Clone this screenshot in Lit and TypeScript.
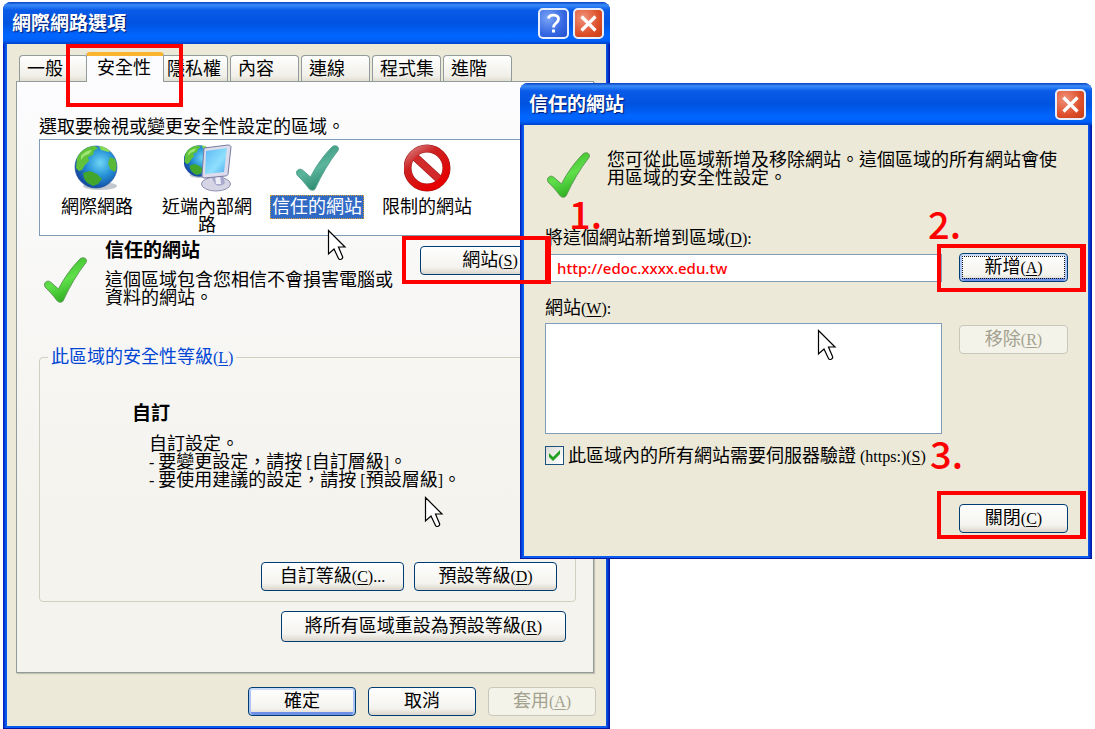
import { LitElement, html, css, svg, nothing } from "lit";
import { customElement, property, state } from "lit/decorators.js";

const latin = (s: string) => html`<span class="latin">${s}</span>`;
const key = (s: string, tail = "") =>
  html`<span class="latin">(<u>${s}</u>)${tail}</span>`;

const shared = css`
  * {
    box-sizing: border-box;
  }
  .latin {
    font-size: 16px;
    line-height: 14px;
  }
  u {
    text-decoration-thickness: 1px;
    text-underline-offset: 2px;
  }
  button {
    font: inherit;
    color: inherit;
    margin: 0;
    padding: 0;
  }
  .btn {
    height: 29px;
    padding-bottom: 2px;
    border: 1px solid #003c74;
    border-radius: 4px;
    background: linear-gradient(#ffffff, #f4f3ee 75%, #dcd6cc);
    line-height: 18px;
    white-space: nowrap;
  }
  .btn.primary {
    box-shadow: inset 0 2px 0 #cbdcfb, inset 2px 0 0 #a9c4f5,
      inset -2px 0 0 #a9c4f5, inset 0 -3px 0 #6e8fe6;
  }
  .btn.focused {
    outline: 1px dotted #111;
    outline-offset: -4px;
  }
  .btn:disabled {
    color: #a3a18f;
    border-color: #c9c7ba;
    background: #f4f3ea;
  }
`;

const checkMark = (id: string, light: string, dark: string, edge: string) => svg`
  <defs>
    <linearGradient id=${id} x1="0" y1="0" x2="0.4" y2="1">
      <stop offset="0" stop-color=${dark} />
      <stop offset="0.6" stop-color=${light} />
      <stop offset="1" stop-color=${dark} />
    </linearGradient>
  </defs>
  <path d="M2.500 28c1-3 4-3.500 6-2l8 7C22 22 30 11 38 3c2.500-2.500 8-1 6 3.500C35 18 28 30 21.500 44c-1 3-5 3-7 0C11 39 7 35 3 31z"
    fill="url(#${id})" stroke=${edge} stroke-width="1" />`;

const globe = (id: string) => svg`
  <defs>
    <radialGradient id=${id} cx="0.6" cy="0.4" r="0.65">
      <stop offset="0" stop-color="#6fd6f5" />
      <stop offset="0.5" stop-color="#2590d6" />
      <stop offset="1" stop-color="#12429b" />
    </radialGradient>
  </defs>
  <ellipse cx="26" cy="42" rx="17" ry="4" fill="#9aa3ad" opacity="0.6" />
  <circle cx="22" cy="23" r="21" fill="url(#${id})" stroke="#1b4f9c" stroke-width="0.6" />
  <path d="M3 14C6 7 13 2 21 2l3 2-4 3-1 4-5 2 1 4-4 4-3 5-3 1-3-3z" fill="#5fc23a" />
  <path d="M25 2c4 0 8 2 11 5l-2 1-3-1-4-1z" fill="#86dd55" />
  <path d="M9 29l7-2 7 3 5 5-4 5-5 2c-5-2-8-5-9-8z" fill="#42a52c" />
  <path d="M36 13l5 2c2 5 2 9 0 13l-5-3-2-6z" fill="#59b936" />
  <path d="M7 12c3-4 7-6 11-6l-3 4-5 2-3 4z" fill="#b0ef83" opacity="0.8" />`;

@customElement("zone-icon")
export class ZoneIcon extends LitElement {
  @property() kind = "check";

  static styles = css`
    :host {
      display: block;
    }
    .art {
      display: block;
      width: 48px;
      height: 48px;
    }
  `;

  private art() {
    switch (this.kind) {
      case "internet":
        return globe("g1");
      case "intranet":
        return svg`
          <g transform="translate(-1 0) scale(0.74)">${globe("g2")}</g>
          <defs>
            <linearGradient id="scr" x1="0" y1="0" x2="1" y2="1">
              <stop offset="0" stop-color="#5cb8f5" />
              <stop offset="0.6" stop-color="#8fe0fd" />
              <stop offset="1" stop-color="#4aa9f0" />
            </linearGradient>
          </defs>
          <ellipse cx="32" cy="40" rx="14.500" ry="7" fill="#d5d5e6" stroke="#8d8fb0" />
          <path d="M26 31h13l2 8c-3 3-7 4-10 1z" fill="#a9aacb" />
          <path d="M31 31h5l1 9h-5z" fill="#eeeef8" />
          <path d="M20 4l24-3c2 0 3 1 3 2l-3 27c0 1-1 2-3 2l-20 2c-2 0-3-1-3-3z" fill="#dcdcec" stroke="#7779a0" />
          <path d="M22 7l21-3-3 24-19 2z" fill="url(#scr)" />`;
      case "blocked":
        return svg`
          <defs>
            <linearGradient id="ban" x1="0" y1="0" x2="0.7" y2="1">
              <stop offset="0" stop-color="#d98080" />
              <stop offset="0.35" stop-color="#cc2222" />
              <stop offset="1" stop-color="#e60000" />
            </linearGradient>
          </defs>
          <circle cx="23" cy="24" r="19.500" fill="#ffffff" stroke="#9c1c1c" stroke-width="8" />
          <path d="M10 12L36 36" stroke="#9c1c1c" stroke-width="8" />
          <path d="M10 12L36 36" stroke="#d22a2a" stroke-width="7" />
          <circle cx="23" cy="24" r="19.500" fill="none" stroke="url(#ban)" stroke-width="7" />`;
      case "selected":
        return checkMark("c1", "#5ab59c", "#2f8a72", "#5aa590");
      default:
        return checkMark("c2", "#5fe04a", "#2fae20", "#5f9a55");
    }
  }

  render() {
    return html`<svg class="art" viewBox="0 0 48 48" aria-hidden="true">${this.art()}</svg>`;
  }
}

@customElement("xp-window")
export class XpWindow extends LitElement {
  @property() heading = "";
  @property({ type: Boolean }) help = false;

  static styles = [
    shared,
    css`
      :host {
        display: block;
      }
      .frame {
        padding: 0 4px 3px;
        border-radius: 8px 8px 0 0;
        background: linear-gradient(90deg, #0019b8, #0a5cf0 3px, #0a5cf0 calc(100% - 4px), #0010a0);
        box-shadow: inset 0 -1px 0 #0016a0;
      }
      .bar {
        display: flex;
        align-items: center;
        gap: 4px;
        height: 42px;
        margin: 0 -4px;
        padding: 1px 6px 0 9px;
        border-radius: 8px 8px 0 0;
        background: linear-gradient(#0840c0, #3a8bf8 3px, #0a5be8 8px, #0053e0 50%, #0066ff 80%, #0060f8 92%, #0040c8);
      }
      .title {
        flex: 1;
        margin: 0;
        color: #fff;
        font-size: 19px;
        line-height: 22px;
        font-weight: 700;
        text-shadow: 1px 1px 1px #001a70;
      }
      .cap {
        display: block;
        width: 31px;
        height: 31px;
        border: 2px solid #e8eefc;
        border-radius: 5px;
        background: radial-gradient(circle at 30% 30%, #7ba4f6, #3567e2 60%, #2450cc);
      }
      .cap.close {
        background: radial-gradient(circle at 30% 30%, #f0937a, #dd4f2a 60%, #c63c14);
      }
      .glyph {
        display: block;
        width: 27px;
        height: 27px;
      }
      .body {
        background: #ece9d8;
      }
    `,
  ];

  render() {
    return html`
      <section class="frame" aria-label=${this.heading}>
        <header class="bar">
          <h1 class="title">${this.heading}</h1>
          ${this.help
            ? html`<button class="cap" aria-label="說明">
                <svg class="glyph" viewBox="0 0 27 27" aria-hidden="true">
                  <path d="M8.500 8.500C9 4 18.500 4 18.500 9c0 4-5 4-5 8.500" fill="none" stroke="#fff" stroke-width="2.800" />
                  <rect x="12" y="19.500" width="3" height="3" fill="#fff" />
                </svg>
              </button>`
            : nothing}
          <button class="cap close" aria-label="關閉">
            <svg class="glyph" viewBox="0 0 27 27" aria-hidden="true">
              <path d="M6.500 6.500l14 14M20.500 6.500l-14 14" stroke="#fff" stroke-width="3.200" />
            </svg>
          </button>
        </header>
        <div class="body"><slot></slot></div>
      </section>
    `;
  }
}

@customElement("internet-options")
export class InternetOptions extends LitElement {
  @state() private zone = "信任的網站";

  private tabs = ["一般", "安全性", "隱私權", "內容", "連線", "程式集", "進階"];
  private zones = [
    { icon: "internet", name: "網際網路" },
    { icon: "intranet", name: "近端內部網路" },
    { icon: "selected", name: "信任的網站" },
    { icon: "blocked", name: "限制的網站" },
  ];

  static styles = [
    shared,
    css`
      :host {
        display: block;
      }
      .content {
        padding: 8px 12px 10px 9px;
      }
      .tabs {
        display: flex;
        align-items: flex-end;
        gap: 2px;
        padding-left: 3px;
        height: 29px;
      }
      .tab {
        width: 69px;
        height: 26px;
        padding-left: 7px;
        border: 1px solid #919b9c;
        border-bottom: 0;
        border-radius: 4px 4px 0 0;
        background: linear-gradient(#fff, #f0efe8 80%, #e2dfd2);
        text-align: left;
        line-height: 18px;
        white-space: nowrap;
      }
      .tab.active {
        position: relative;
        width: 78px;
        height: 30px;
        margin: 0 -7px -1px -4px;
        padding: 0 0 2px 10px;
        border-top: 4px solid #fbb430;
        background: #fcfcfe;
      }
      .panel {
        padding: 36px 17px 30px 22px;
        border: 1px solid #919b9c;
        background: linear-gradient(#fcfcfe, #f4f3ee 70%);
        box-shadow: 1px 1px 1px #c4c1b2;
      }
      .intro {
        margin: 0 0 3px;
      }
      .zones {
        display: flex;
        height: 97px;
        padding: 4px 0 0 2px;
        border: 1px solid #7f9db9;
        background: #fff;
      }
      .zone {
        display: flex;
        flex-direction: column;
        align-items: center;
        width: 110px;
        border: 0;
        background: none;
      }
      .zone-icon {
        width: 46px;
        height: 48px;
      }
      .zone-name {
        max-width: 96px;
        margin-top: 5px;
        padding: 1px 2px;
      }
      .chosen {
        margin-top: 3px;
        padding: 3px 2px;
        background: #316ac5;
        color: #fff;
        outline: 1px dotted #d8a030;
        outline-offset: -1px;
      }
      .about {
        display: flex;
        padding: 5px 16px 0 3px;
      }
      .about-icon {
        margin: 15px 15px 0 0;
      }
      .about-text {
        flex: 1;
      }
      .strong {
        margin: 0;
        font-size: 19px;
        line-height: 20px;
        font-weight: 700;
      }
      .desc {
        width: 288px;
        margin: 10px 0 0;
      }
      .sites {
        width: 140px;
        margin-top: 5px;
        margin-left: -200px;
      }
      .level {
        min-width: 0;
        margin: 41px 0 0;
        padding: 38px 18px 10px 92px;
        border: 1px solid #d0d0bf;
        border-radius: 4px;
      }
      .legend {
        margin-left: -84px;
        padding: 0 3px;
        color: #0046d5;
      }
      .custom {
        margin: 11px 0 73px 17px;
      }
      .actions {
        display: flex;
        justify-content: flex-end;
        gap: 10px;
      }
      .level-btn {
        width: 143px;
      }
      .reset {
        margin: 9px 10px 0 0;
      }
      .reset-btn {
        width: 285px;
        height: 31px;
      }
      .footer {
        margin: 14px -2px 0 0;
        gap: 12px;
      }
      .foot-btn {
        width: 108px;
      }
    `,
  ];

  render() {
    return html`
      <div class="content">
        <div class="tabs" role="tablist">
          ${this.tabs.map(
            (t, i) => html`<button class="tab ${i === 1 ? "active" : ""}" role="tab" aria-selected=${i === 1}>${t}</button>`
          )}
        </div>
        <div class="panel" role="tabpanel">
          <p class="intro">選取要檢視或變更安全性設定的區域。</p>
          <div class="zones" role="listbox" aria-label="區域">
            ${this.zones.map(
              (z) => html`<button class="zone" role="option" aria-selected=${z.name === this.zone}
                @click=${() => (this.zone = z.name)}>
                <zone-icon class="zone-icon" kind=${z.icon}></zone-icon>
                <span class="zone-name ${z.name === this.zone ? "chosen" : ""}">${z.name}</span>
              </button>`
            )}
          </div>
          <div class="about">
            <zone-icon class="about-icon" kind="check"></zone-icon>
            <div class="about-text">
              <h2 class="strong">信任的網站</h2>
              <p class="desc">這個區域包含您相信不會損害電腦或資料的網站。</p>
            </div>
            <button class="btn sites">網站${key("S")}</button>
          </div>
          <fieldset class="level">
            <legend class="legend">此區域的安全性等級${key("L")}</legend>
            <h2 class="strong">自訂</h2>
            <div class="custom">
              自訂設定。<br />
              ${latin("- ")}要變更設定，請按${latin(" [")}自訂層級${latin("]")}。<br />
              ${latin("- ")}要使用建議的設定，請按${latin(" [")}預設層級${latin("]")}。
            </div>
            <div class="actions">
              <button class="btn level-btn">自訂等級${key("C", "...")}</button>
              <button class="btn level-btn">預設等級${key("D")}</button>
            </div>
          </fieldset>
          <div class="actions reset">
            <button class="btn reset-btn">將所有區域重設為預設等級${key("R")}</button>
          </div>
        </div>
        <div class="actions footer">
          <button class="btn foot-btn primary">確定</button>
          <button class="btn foot-btn">取消</button>
          <button class="btn foot-btn" disabled>套用${key("A")}</button>
        </div>
      </div>
    `;
  }
}

@customElement("trusted-sites")
export class TrustedSites extends LitElement {
  static styles = [
    shared,
    css`
      :host {
        display: block;
      }
      .content {
        padding: 26px 20px 23px 21px;
      }
      .intro {
        display: flex;
        gap: 14px;
        margin-bottom: 42px;
      }
      .intro-icon {
        height: 36px;
      }
      .intro-text {
        flex: 1;
        margin: 0;
      }
      .row {
        display: grid;
        grid-template-columns: 1fr 109px;
        column-gap: 17px;
        align-items: start;
      }
      .lbl {
        display: block;
        margin-bottom: 6px;
      }
      .add {
        align-items: center;
        margin-bottom: 17px;
      }
      .url {
        width: 100%;
        height: 28px;
        padding: 0 11px;
        border: 1px solid #7f9db9;
        background: #fff;
        color: #f00;
        font: 500 15px/20px "Noto Sans", sans-serif;
      }
      .list {
        display: block;
        width: 100%;
        height: 111px;
        border: 1px solid #7f9db9;
        border-radius: 0;
        background: #fff;
      }
      .remove {
        margin-top: 2px;
      }
      .verify {
        display: flex;
        align-items: center;
        gap: 4px;
        margin: 12px 0 39px;
      }
      .box {
        appearance: none;
        width: 19px;
        height: 19px;
        margin: 0;
        border: 1px solid #1c5180;
        background: linear-gradient(135deg, #dcdcd7, #fff);
      }
      .box:checked {
        background: url("data:image/svg+xml,%3Csvg xmlns='http://www.w3.org/2000/svg' viewBox='0 0 17 17'%3E%3Cpath d='M3 6l4 4 7-7v4l-7 7-4-4z' fill='%2321a121'/%3E%3C/svg%3E"),
          linear-gradient(135deg, #dcdcd7, #fff);
      }
      .end {
        display: flex;
        justify-content: flex-end;
      }
      .close {
        width: 109px;
      }
    `,
  ];

  render() {
    return html`
      <div class="content">
        <div class="intro">
          <zone-icon class="intro-icon" kind="check"></zone-icon>
          <p class="intro-text">您可從此區域新增及移除網站。這個區域的所有網站會使用區域的安全性設定。</p>
        </div>
        <label class="lbl" for="url">將這個網站新增到區域${key("D", ":")}</label>
        <div class="row add">
          <input class="url" id="url" type="text" value="http://edoc.xxxx.edu.tw" />
          <button class="btn primary focused">新增${key("A")}</button>
        </div>
        <label class="lbl" for="list">網站${key("W", ":")}</label>
        <div class="row">
          <select class="list" id="list" size="6"></select>
          <button class="btn remove" disabled>移除${key("R")}</button>
        </div>
        <div class="verify">
          <input class="box" id="https" type="checkbox" checked />
          <label for="https">此區域內的所有網站需要伺服器驗證${latin(" (https:)")}${key("S")}</label>
        </div>
        <div class="end"><button class="btn close">關閉${key("C")}</button></div>
      </div>
    `;
  }
}

@customElement("app-root")
export class AppRoot extends LitElement {
  static styles = [
    shared,
    css`
      :host {
        display: block;
        position: relative;
        min-height: 100vh;
        overflow: hidden;
        background: #fff;
        color: #000;
        font-family: "Liberation Serif", "Noto Sans CJK TC", sans-serif;
        font-size: 18px;
        line-height: 18px;
      }
      .win,
      .mark,
      .num,
      .cursor {
        position: absolute;
      }
      .options {
        top: 2px;
        left: 3px;
        right: 485px;
      }
      .sites {
        top: 83px;
        left: 520px;
        right: 3px;
      }
      .mark {
        border: 4px solid #f00;
        pointer-events: none;
      }
      .m-tab {
        left: 66px;
        top: 44px;
        width: 117px;
        height: 63px;
      }
      .m-sites {
        left: 402px;
        top: 236px;
        width: 149px;
        height: 48px;
        border-right-width: 6px;
      }
      .m-add,
      .m-close {
        right: 9px;
        width: 149px;
        height: 48px;
        border-right-width: 6px;
      }
      .m-add {
        top: 244px;
      }
      .m-close {
        top: 491px;
      }
      .num {
        color: #f00;
        font: 500 38px/40px "Noto Sans CJK TC", sans-serif;
      }
      .n1 {
        left: 569px;
        top: 193px;
      }
      .n2 {
        left: 928px;
        top: 203px;
      }
      .n3 {
        left: 930px;
        top: 433px;
      }
      .cursor {
        width: 20px;
        height: 32px;
      }
      .c1 {
        left: 327px;
        top: 229px;
      }
      .c2 {
        left: 424px;
        top: 496px;
      }
      .c3 {
        left: 817px;
        top: 329px;
      }
    `,
  ];

  private cursor(place: string) {
    return html`<svg class="cursor ${place}" viewBox="0 0 20 32" aria-hidden="true">
      <path d="M1.500 1.500V25l5.500-5 4.500 9.500c1 2 5 .5 4-2L11.500 18H18z" fill="#fff" stroke="#000" stroke-width="1.200" />
    </svg>`;
  }

  render() {
    return html`
      <xp-window class="win options" lang="zh-Hant" heading="網際網路選項" help>
        <internet-options></internet-options>
      </xp-window>
      <xp-window class="win sites" lang="zh-Hant" heading="信任的網站">
        <trusted-sites></trusted-sites>
      </xp-window>
      ${this.cursor("c1")}${this.cursor("c2")}${this.cursor("c3")}
      <div class="mark m-tab"></div>
      <div class="mark m-sites"></div>
      <div class="mark m-add"></div>
      <div class="mark m-close"></div>
      <span class="num n1">1.</span>
      <span class="num n2">2.</span>
      <span class="num n3">3.</span>
    `;
  }
}
